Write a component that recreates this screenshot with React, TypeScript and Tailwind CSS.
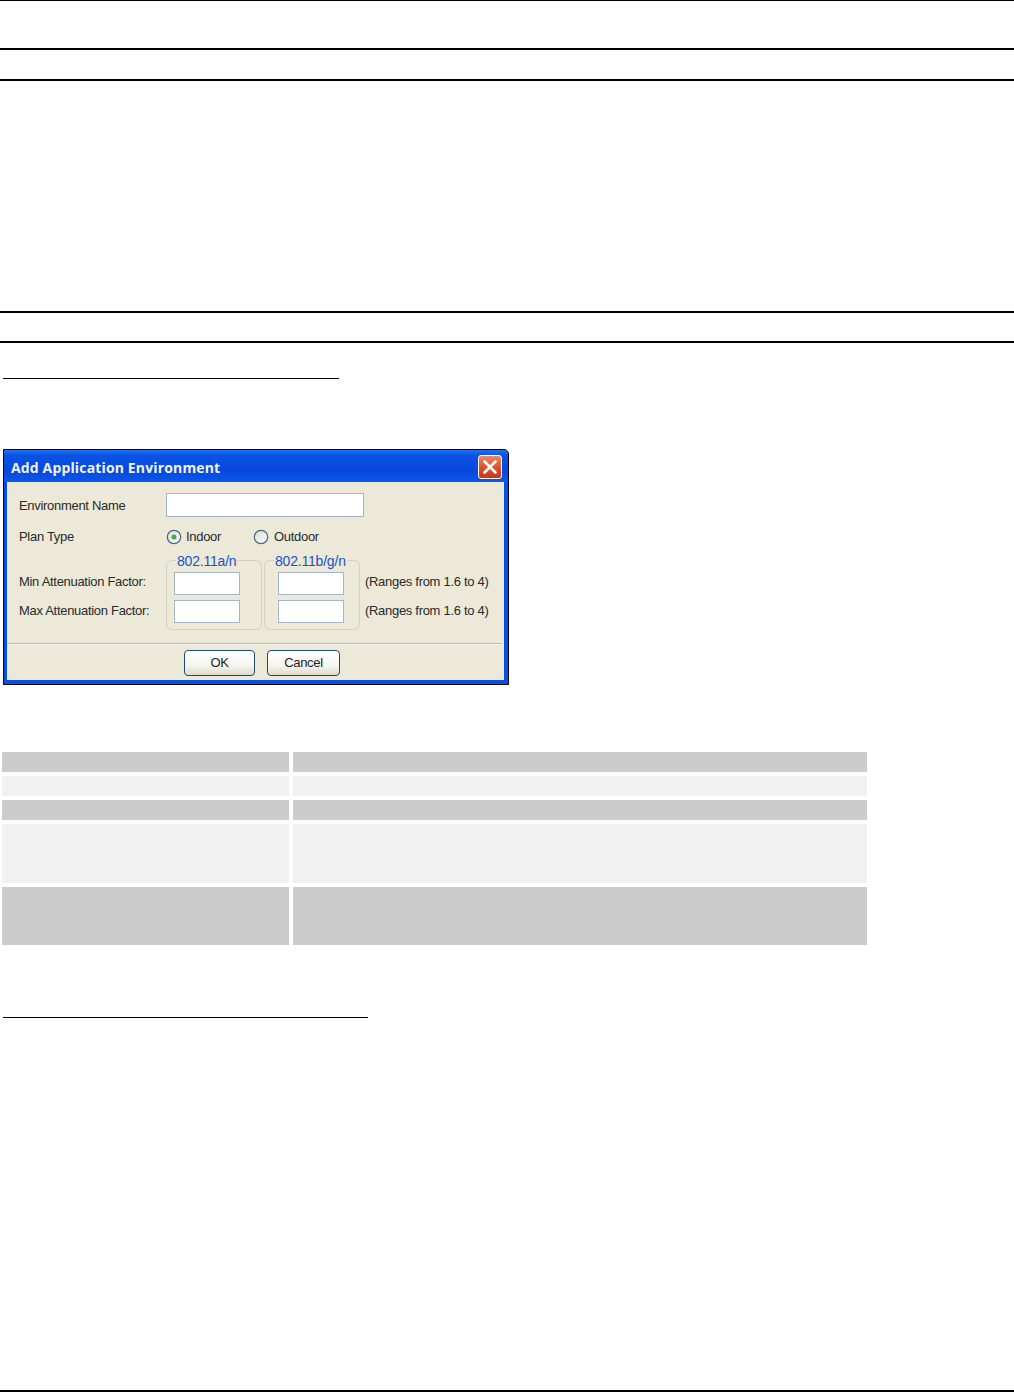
const font = "font-['Liberation_Sans',Arial,sans-serif]";

function TextBox({ className }: { className: string }) {
  return <div className={`bg-white border border-[#a3b4cb] ${className}`} />;
}

function Radio({ checked }: { checked?: boolean }) {
  return (
    <svg width="16" height="16" viewBox="0 0 16 16" className="shrink-0">
      <defs>
        <linearGradient id={checked ? "radioOn" : "radioOff"} x1="0" y1="0" x2="1" y2="1">
          <stop offset="0" stopColor="#dcd9cc" />
          <stop offset="1" stopColor="#ffffff" />
        </linearGradient>
      </defs>
      <circle cx="8" cy="8" r="6.7" fill={`url(#${checked ? "radioOn" : "radioOff"})`} stroke="#46698f" strokeWidth="1.2" />
      {checked && <circle cx="8" cy="8" r="2.5" fill="#3fae3f" />}
    </svg>
  );
}

function GroupBox({ legend, legendClass, inputClass }: { legend: string; legendClass: string; inputClass: string }) {
  return (
    <div className="relative w-[96px] h-[70px] border border-[#d3d0bf] rounded-[6px] pt-[11px] flex flex-col gap-[5px]">
      <span className={`absolute -top-[8px] bg-[#ece9d8] px-px text-[14px] leading-[16px] text-[#1c4fd0] tracking-[-0.2px] whitespace-nowrap ${legendClass}`}>
        {legend}
      </span>
      <TextBox className={`w-[66px] h-[23px] ${inputClass}`} />
      <TextBox className={`w-[66px] h-[23px] ${inputClass}`} />
    </div>
  );
}

function XpButton({ label, className }: { label: string; className: string }) {
  return (
    <button className={`h-[26px] pb-[2px] rounded-[4px] border border-[#1f4a78] bg-[linear-gradient(180deg,#ffffff_0%,#f6f5ef_60%,#dedbcc_100%)] text-[13px] leading-none text-[#222] ${className}`}>
      {label}
    </button>
  );
}

function Dialog() {
  return (
    <div className="ml-[3px] w-[506px] h-[236px] border border-black rounded-tr-[5px] bg-[#0a50e0] flex flex-col text-[13px] text-[#2a2a2a] tracking-[-0.3px]">
      <div className="h-[32px] shrink-0 flex items-center justify-between pl-[7px] pr-[6px] pt-[2px] rounded-tr-[4px] bg-[linear-gradient(180deg,#1c72f2_0%,#0b52e4_18%,#0848dc_65%,#0a58ec_100%)]">
        <span className="font-['Open_Sans',sans-serif] font-bold text-[14px] tracking-[0.15px] text-[#eef3fb]">
          Add Application Environment
        </span>
        <div className="w-[24px] h-[24px] rounded-[3px] border border-white bg-[linear-gradient(180deg,#ee8a62_0%,#d9502a_55%,#c4381a_100%)] flex items-center justify-center">
          <svg width="16" height="16" viewBox="0 0 16 16">
            <path d="M2.5 2.5 L13.5 13.5 M13.5 2.5 L2.5 13.5" stroke="#fff" strokeWidth="2.6" strokeLinecap="round" />
          </svg>
        </div>
      </div>

      <div className="ml-[3px] mr-[4px] flex-1 bg-[#ece9d8] flex flex-col pt-[11px]">
        <div className="flex items-center h-[24px] pl-[12px]">
          <span className="w-[147px] shrink-0 pt-[1px]">Environment Name</span>
          <TextBox className="w-[198px] h-[24px]" />
        </div>

        <div className="flex items-center h-[24px] mt-[8px] pl-[12px]">
          <span className="w-[147px] shrink-0">Plan Type</span>
          <Radio checked />
          <span className="ml-[4px] w-[67px]">Indoor</span>
          <Radio />
          <span className="ml-[5px]">Outdoor</span>
        </div>

        <div className="flex mt-[11px] pl-[12px]">
          <div className="w-[147px] shrink-0 flex flex-col pt-[11px] gap-[7px]">
            <span className="h-[22px] leading-[22px] whitespace-nowrap">Min Attenuation Factor:</span>
            <span className="h-[22px] leading-[22px] whitespace-nowrap">Max Attenuation Factor:</span>
          </div>
          <GroupBox legend="802.11a/n" legendClass="left-[9px]" inputClass="ml-[7px]" />
          <div className="ml-[2px]">
            <GroupBox legend="802.11b/g/n" legendClass="left-[9px]" inputClass="ml-[13px]" />
          </div>
          <div className="ml-[5px] flex flex-col pt-[11px] gap-[7px]">
            <span className="h-[22px] leading-[22px] whitespace-nowrap">(Ranges from 1.6 to 4)</span>
            <span className="h-[22px] leading-[22px] whitespace-nowrap">(Ranges from 1.6 to 4)</span>
          </div>
        </div>

        <div className="mt-[13px] mr-[2px] h-[2px] border-t border-[#bdbaa8] bg-[#f6f5ee]" />

        <div className="flex mt-[5px] pl-[177px] gap-[12px]">
          <XpButton label="OK" className="w-[71px]" />
          <XpButton label="Cancel" className="w-[73px]" />
        </div>
      </div>
      <div className="h-[4px] shrink-0" />
    </div>
  );
}

const rows = [
  { h: "h-[20px]", bg: "bg-[#cccccc]" },
  { h: "h-[20px]", bg: "bg-[#f1f1f1]" },
  { h: "h-[20px]", bg: "bg-[#cccccc]" },
  { h: "h-[59px]", bg: "bg-[#f1f1f1]" },
  { h: "h-[58px]", bg: "bg-[#cccccc]" },
];

function ParamTable() {
  return (
    <div className="ml-[2px] w-[865px] flex flex-col gap-[4px]">
      {rows.map((r, i) => (
        <div key={i} className={`flex gap-[4px] ${r.h}`}>
          <div className={`w-[287px] ${r.bg}`} />
          <div className={`flex-1 ${r.bg}`} />
        </div>
      ))}
    </div>
  );
}

export default function App() {
  return (
    <main className={`${font} w-[1014px] h-[1392px] bg-white overflow-hidden flex flex-col`}>
      <div className="h-px bg-black" />
      <div className="h-[2px] mt-[47px] bg-black" />
      <div className="h-[2px] mt-[29px] bg-black" />
      <div className="h-[2px] mt-[230px] bg-black" />
      <div className="h-[2px] mt-[28px] bg-black" />
      <div className="h-px w-[336px] ml-[3px] mt-[35px] bg-black" />
      <div className="mt-[70px]">
        <Dialog />
      </div>
      <div className="mt-[67px]">
        <ParamTable />
      </div>
      <div className="h-px w-[365px] ml-[3px] mt-[72px] bg-black" />
      <div className="h-[2px] mt-auto bg-black" />
    </main>
  );
}
